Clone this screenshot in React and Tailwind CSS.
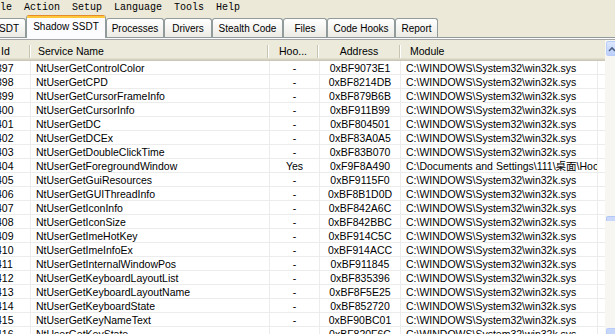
import React from "react";

const W = "C:\\WINDOWS\\System32\\win32k.sys";
const rows = [
  ["397", "NtUserGetControlColor", "-", "0xBF9073E1", W],
  ["398", "NtUserGetCPD", "-", "0xBF8214DB", W],
  ["399", "NtUserGetCursorFrameInfo", "-", "0xBF879B6B", W],
  ["400", "NtUserGetCursorInfo", "-", "0xBF911B99", W],
  ["401", "NtUserGetDC", "-", "0xBF804501", W],
  ["402", "NtUserGetDCEx", "-", "0xBF83A0A5", W],
  ["403", "NtUserGetDoubleClickTime", "-", "0xBF83B070", W],
  ["404", "NtUserGetForegroundWindow", "Yes", "0xF9F8A490", "C:\\Documents and Settings\\111\\桌面\\Hook.sys"],
  ["405", "NtUserGetGuiResources", "-", "0xBF9115F0", W],
  ["406", "NtUserGetGUIThreadInfo", "-", "0xBF8B1D0D", W],
  ["407", "NtUserGetIconInfo", "-", "0xBF842A6C", W],
  ["408", "NtUserGetIconSize", "-", "0xBF842BBC", W],
  ["409", "NtUserGetImeHotKey", "-", "0xBF914C5C", W],
  ["410", "NtUserGetImeInfoEx", "-", "0xBF914ACC", W],
  ["411", "NtUserGetInternalWindowPos", "-", "0xBF911845", W],
  ["412", "NtUserGetKeyboardLayoutList", "-", "0xBF835396", W],
  ["413", "NtUserGetKeyboardLayoutName", "-", "0xBF8F5E25", W],
  ["414", "NtUserGetKeyboardState", "-", "0xBF852720", W],
  ["415", "NtUserGetKeyNameText", "-", "0xBF90BC01", W],
  ["416", "NtUserGetKeyState", "-", "0xBF820F6C", W],
];

function Tab({ label, w, className = "" }) {
  return (
    <div
      className={`h-[19px] shrink-0 border border-b-0 border-[#919b9c] rounded-t-[3px] bg-linear-to-b from-[#ffffff] to-[#ecebe5] flex items-center justify-center ${w} ${className}`}
    >
      <span className="leading-none pt-[1px]">{label}</span>
    </div>
  );
}

function HeadCell({ w, children, align = "justify-start", pad = "", sep = true }) {
  return (
    <div className={`flex items-center h-full shrink-0 ${w}`}>
      <div className={`flex-1 flex ${align} ${pad} whitespace-nowrap overflow-hidden`}>{children}</div>
      {sep && <div className="w-[2px] h-[13px] border-l border-[#c7c5b2] bg-white shrink-0" />}
    </div>
  );
}

export default function App() {
  return (
    <div
      className="w-[615px] h-[334px] overflow-hidden bg-[#ece9d8] text-black flex flex-col"
      style={{ fontFamily: '"Liberation Sans", "Noto Sans CJK SC", sans-serif' }}
    >
      {/* Menu bar */}
      <div
        className="h-[15px] shrink-0 whitespace-pre text-[10px] leading-[15px]"
        style={{ fontFamily: '"Liberation Mono", monospace' }}
      >
        {"le  Action  Setup  Language  Tools  Help"}
      </div>

      {/* Tabs */}
      <div className="h-[22px] shrink-0 flex items-end text-[10px] relative z-10">
        <div className="h-[19px] w-[26px] shrink-0 border-t border-r border-[#919b9c] rounded-tr-[3px] bg-linear-to-b from-[#ffffff] to-[#ecebe5] flex items-center overflow-hidden">
          <span className="leading-none pt-[1px] ml-[-1px]">SDT</span>
        </div>
        <div className="h-[23px] w-[80px] shrink-0 mb-[-1px] border-x border-[#919b9c] rounded-t-[3px] bg-[#fcfcfe] flex flex-col overflow-hidden">
          <div className="h-[3px] shrink-0 bg-[#ffc83c] border-t border-[#e68b2c]" />
          <div className="flex-1 flex items-center justify-center leading-none pb-[3px]">Shadow SSDT</div>
        </div>
        <Tab label="Processes" w="w-[58px]" />
        <Tab label="Drivers" w="w-[48px]" />
        <Tab label="Stealth Code" w="w-[71px]" />
        <Tab label="Files" w="w-[44px]" />
        <Tab label="Code Hooks" w="w-[68px]" />
        <Tab label="Report" w="w-[43px]" />
      </div>

      {/* Panel */}
      <div className="flex-1 border-t border-[#919b9c] bg-[#fcfcfe] pt-[1px] flex flex-col min-h-0">
        <div className="flex-1 flex min-h-0 border-t border-[#a5a5a5] text-[10.5px]">
          {/* List */}
          <div className="w-[605px] shrink-0 flex flex-col bg-white overflow-hidden">
            {/* Header */}
            <div className="h-[21px] shrink-0 flex bg-[#ebeadb] shadow-[inset_0_-1px_#cbc7b8,inset_0_-2px_#d6d2c2,inset_0_-3px_#e2decd] pt-[2px]">
              <HeadCell w="w-[31px]" pad="pl-[1px]">Id</HeadCell>
              <HeadCell w="w-[238px]" pad="pl-[7px]">Service Name</HeadCell>
              <HeadCell w="w-[50px]" align="justify-center">Hoo...</HeadCell>
              <HeadCell w="w-[82px]" align="justify-center">Address</HeadCell>
              <HeadCell w="w-[204px]" pad="pl-[9px]" sep={false}>Module</HeadCell>
            </div>
            {/* Rows */}
            <div className="flex flex-col">
              {rows.map((r) => (
                <div key={r[0]} className="h-[14px] shrink-0 flex border-b border-[#ececec] leading-[14px]">
                  <div className="w-[31px] shrink-0 border-r border-[#ececec] overflow-hidden whitespace-nowrap">
                    <span className="inline-block ml-[-4px]">{r[0]}</span>
                  </div>
                  <div className="w-[239px] shrink-0 border-r border-[#ececec] pl-[5px] overflow-hidden whitespace-nowrap">
                    {r[1]}
                  </div>
                  <div className="w-[50px] shrink-0 border-r border-[#ececec] text-center overflow-hidden whitespace-nowrap">
                    {r[2]}
                  </div>
                  <div className="w-[81px] shrink-0 border-r border-[#ececec] text-center overflow-hidden whitespace-nowrap">
                    {r[3]}
                  </div>
                  <div className="w-[197px] shrink-0 border-r border-[#ececec] pl-[5px] overflow-hidden whitespace-nowrap">
                    {r[4]}
                  </div>
                </div>
              ))}
            </div>
          </div>
          {/* Scrollbar */}
          <div className="flex-1 bg-[#f7f6f1] flex flex-col pl-[1px] pt-[1px]">
            <div className="h-[15px] shrink-0 rounded-[2px] border border-[#b9cdfa] bg-linear-to-b from-[#dde7fd] to-[#bccffa] flex items-center justify-start pl-[1px]">
              <svg width="8" height="6" viewBox="0 0 8 6">
                <path d="M1 5 L4 2 L7 5" stroke="#4d6185" strokeWidth="1.6" fill="none" />
              </svg>
            </div>
            <div className="h-[160px] shrink-0" />
            <div className="h-[5px] shrink-0 rounded-t-[2px] border-t border-x border-[#b4c8f6] bg-[#c9d8fb]" />
            <div className="flex-1" />
            <div className="h-[6px] shrink-0 rounded-t-[2px] border-t border-x border-[#b9cdfa] bg-[#c6d6fb]" />
          </div>
        </div>
      </div>
    </div>
  );
}
